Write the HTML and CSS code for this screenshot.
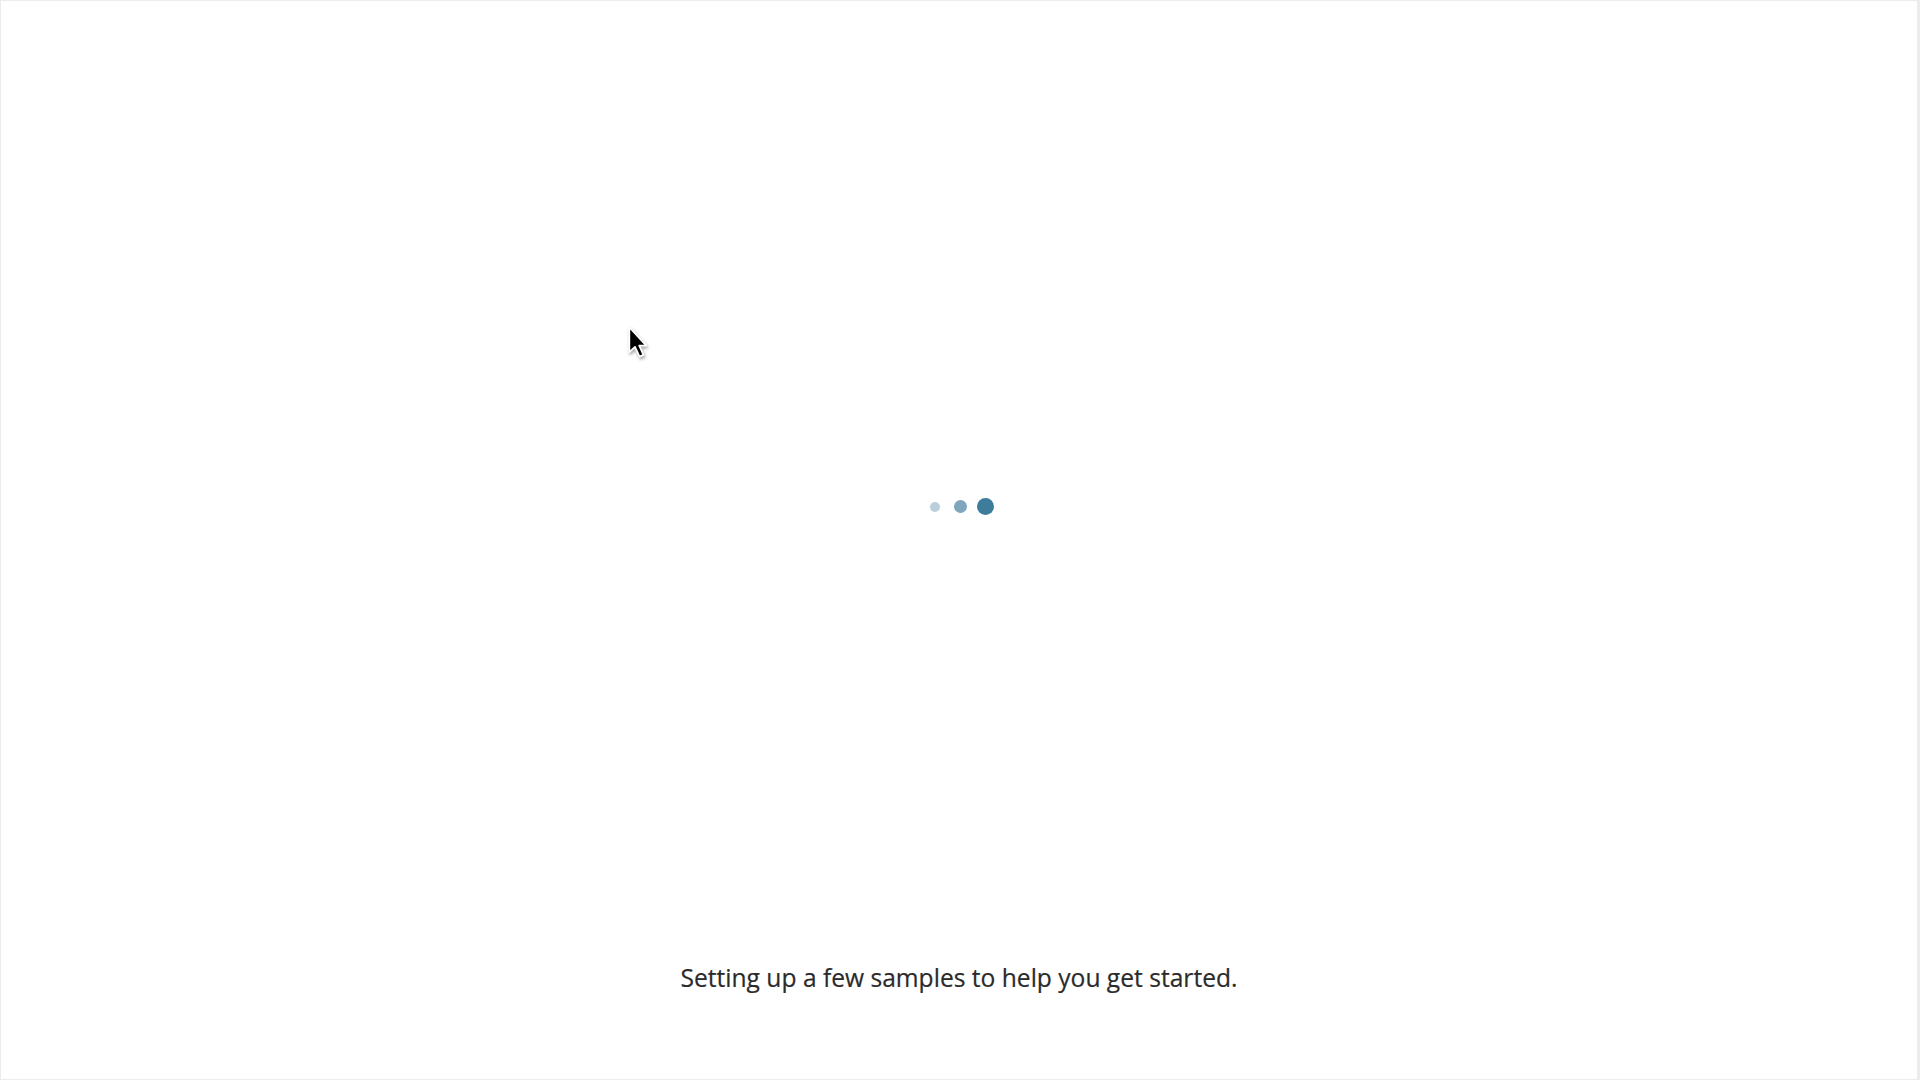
FILE: index.html
```html
<!DOCTYPE html>
<html>
<head>
<meta charset="utf-8">
<link rel="stylesheet" href="styles.css">
</head>
<body>
<div class="frame">
  <div class="loader-area">
    <div class="dots">
      <span class="slot"><span class="dot dot-1"></span></span>
      <span class="slot"><span class="dot dot-2"></span></span>
      <span class="slot"><span class="dot dot-3"></span></span>
    </div>
  </div>
  <p class="message">Setting up a few samples to help you get started.</p>
  <svg class="cursor" width="25" height="34" viewBox="0 0 22 30">
    <path d="M2 1 L2 23 L7 18.5 L11 27 L14.5 25.5 L10.8 17.3 L17 17.3 Z" fill="#000" stroke="#fff" stroke-width="1.6" stroke-linejoin="round"/>
  </svg>
</div>
</body>
</html>
```
FILE: styles.css
```css
html, body {
  margin: 0;
  padding: 0;
  background: #ffffff;
}
.frame {
  position: relative;
  box-sizing: border-box;
  width: 1920px;
  height: 1080px;
  border: 1px solid #ececec;
  border-right-width: 3px;
  display: flex;
  flex-direction: column;
  align-items: center;
  font-family: "Open Sans", "Noto Sans", sans-serif;
}
.loader-area {
  height: 506px;
  display: flex;
  align-items: flex-end;
}
.dots {
  display: flex;
  align-items: center;
  transform: translate(1px, 8px);
}
.slot {
  width: 25px;
  height: 17px;
  display: flex;
  align-items: center;
  justify-content: center;
}
.dot {
  display: block;
  border-radius: 50%;
}
.dot-1 {
  width: 10px;
  height: 10px;
  background: #b9cfdb;
}
.dot-2 {
  width: 13px;
  height: 13px;
  background: #7ea6bd;
}
.dot-3 {
  width: 17px;
  height: 17px;
  background: #3e7c9c;
}
.message {
  margin: 455px 0 0 0;
  font-size: 24.6px;
  line-height: 32px;
  color: #2b2b2b;
  -webkit-text-stroke: 0.2px #2b2b2b;
}
.cursor {
  position: absolute;
  left: 626px;
  top: 325px;
  filter: drop-shadow(1px 2px 1.5px rgba(0,0,0,0.35));
}
```
